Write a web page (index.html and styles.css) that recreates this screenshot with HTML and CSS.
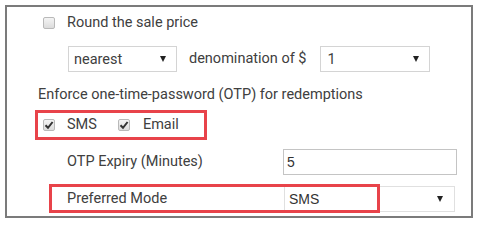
FILE: index.html
```html
<!DOCTYPE html>
<html>
<head>
<meta charset="utf-8">
<link rel="stylesheet" href="styles.css">
</head>
<body>
<div class="frame">
  <div class="row row1">
    <span class="cb"></span>
    <span class="lbl">Round the sale price</span>
  </div>
  <div class="row row2">
    <div class="sel sel-nearest"><span>nearest</span><span class="arrow"></span></div>
    <span class="lbl">denomination of $</span>
    <div class="sel sel-denom"><span>1</span><span class="arrow"></span></div>
  </div>
  <div class="row row3">
    <span class="lbl">Enforce one-time-password (OTP) for redemptions</span>
  </div>
  <div class="row row4">
    <div class="hl-box">
      <span class="cb checked"><svg viewBox="0 0 12 12" width="12" height="12"><path d="M2.5 6.2 L5 8.8 L9.6 3" fill="none" stroke="#333" stroke-width="2"/></svg></span>
      <span class="lbl">SMS</span>
      <span class="cb checked cb-email"><svg viewBox="0 0 12 12" width="12" height="12"><path d="M2.5 6.2 L5 8.8 L9.6 3" fill="none" stroke="#333" stroke-width="2"/></svg></span>
      <span class="lbl">Email</span>
    </div>
  </div>
  <div class="row row5">
    <span class="lbl field-lbl">OTP Expiry (Minutes)</span>
    <div class="inp">5</div>
  </div>
  <div class="row row6">
    <span class="lbl field-lbl">Preferred Mode</span>
    <div class="sel sel-mode"><span>SMS</span><span class="arrow"></span></div>
    <span class="hl-overlay"></span>
  </div>
</div>
</body>
</html>
```
FILE: styles.css
```css
html, body {
  margin: 0;
  padding: 0;
  background: #ffffff;
}
body {
  font-family: Roboto, "Liberation Sans", sans-serif;
  font-size: 14.5px;
  color: #404040;
}
.frame {
  margin: 5px 0 0 5px;
  width: 464px;
  height: 209px;
  border: 2px solid #7b7b7b;
  display: flex;
  flex-direction: column;
}
.row {
  display: flex;
  align-items: center;
  flex: none;
}
.lbl {
  white-space: nowrap;
  line-height: 16px;
}
.cb {
  width: 12px;
  height: 12px;
  box-sizing: border-box;
  border: 1px solid #b9b9b9;
  border-radius: 2px;
  background: linear-gradient(#f4f4f4, #dcdcdc);
  flex: none;
  position: relative;
}
.cb svg {
  position: absolute;
  left: -1px;
  top: -1px;
}
.row1 {
  margin-top: 6px;
  height: 20px;
  padding-left: 36px;
}
.row1 .cb {
  margin-right: 12px;
}
.row2 {
  margin-top: 13px;
  height: 26px;
  padding-left: 61px;
}
.sel {
  height: 26px;
  box-sizing: border-box;
  border: 1px solid #d4d4d4;
  display: flex;
  align-items: center;
  justify-content: space-between;
  background: #fff;
  flex: none;
}
.arrow {
  width: 0;
  height: 0;
  border-left: 3.5px solid transparent;
  border-right: 3.5px solid transparent;
  border-top: 6px solid #222;
}
.sel-nearest {
  width: 109px;
  padding: 0 10px 0 5px;
  margin-right: 12px;
}
.sel-denom {
  width: 110px;
  padding: 0 10px 0 6px;
  margin-left: 14px;
}
.row3 {
  margin-top: 15px;
  height: 16px;
  padding-left: 31px;
}
.row4 {
  margin-top: 7px;
  height: 30px;
  padding-left: 28px;
}
.hl-box {
  box-sizing: border-box;
  width: 172px;
  height: 30px;
  border: 3px solid #e8434a;
  display: flex;
  align-items: center;
  padding-left: 5px;
}
.hl-box .cb {
  margin-right: 12px;
}
.hl-box .cb-email {
  margin-left: 21px;
  margin-right: 13px;
}
.row5 {
  margin-top: 9px;
  height: 26px;
  padding-left: 60px;
}
.field-lbl {
  width: 216px;
}
.inp {
  width: 174px;
  height: 26px;
  box-sizing: border-box;
  border: 1px solid #c4c4c4;
  font-family: "Liberation Sans", Arial, sans-serif;
  font-size: 14px;
  color: #333;
  padding-left: 3px;
  display: flex;
  align-items: center;
}
.row6 {
  margin-top: 9px;
  height: 29px;
  padding-left: 60px;
  position: relative;
}
.sel-mode {
  width: 171px;
  padding: 0 11px 0 4px;
  margin-left: 1px;
  font-family: "Liberation Sans", Arial, sans-serif;
  font-size: 14px;
  color: #333;
  border-color: #e0e0e0;
}
.hl-overlay {
  position: absolute;
  left: 42px;
  top: 0;
  width: 331px;
  height: 29px;
  box-sizing: border-box;
  border: 3px solid #e8434a;
  pointer-events: none;
}
```
